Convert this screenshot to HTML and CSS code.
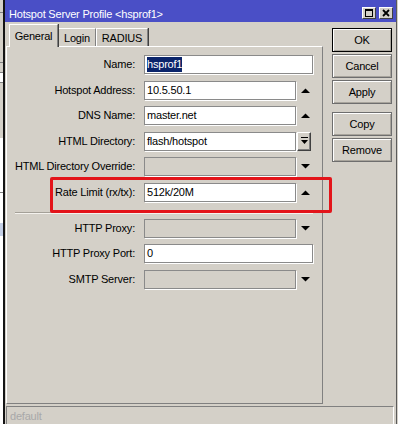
FILE: index.html
```html
<!DOCTYPE html>
<html>
<head>
<meta charset="utf-8">
<link rel="stylesheet" href="styles.css">
</head>
<body>
<div class="screen">
  <div class="behind"></div>
  <div class="window">
    <div class="titlebar">
      <span class="title">Hotspot Server Profile &lt;hsprof1&gt;</span>
      <div class="tbtns">
        <span class="tbtn"><svg width="12" height="10" viewBox="0 0 12 10"><rect x="2.5" y="1.5" width="7" height="7" fill="none" stroke="#000"/><rect x="2" y="1" width="8" height="2" fill="#000"/></svg></span>
        <span class="tbtn"><svg width="12" height="10" viewBox="0 0 12 10"><path d="M3 2 L9 8 M9 2 L3 8" stroke="#000" stroke-width="1.8" fill="none"/></svg></span>
      </div>
    </div>
    <div class="main">
      <div class="tabarea">
        <div class="tabs">
          <div class="tab active t-general">General</div>
          <div class="tab t-login">Login</div>
          <div class="tab t-radius">RADIUS</div>
        </div>
        <div class="panel">
          <div class="form">
            <label>Name:</label>
            <div class="field wide"><span class="sel">hsprof1</span></div>

            <label>Hotspot Address:</label>
            <div class="field">10.5.50.1</div>
            <span class="cell"><svg class="arr" width="9" height="5" viewBox="0 0 9 5"><polygon points="0,5 9,5 4.5,0.5" fill="#000"/></svg></span>

            <label>DNS Name:</label>
            <div class="field">master.net</div>
            <span class="cell"><svg class="arr" width="9" height="5" viewBox="0 0 9 5"><polygon points="0,5 9,5 4.5,0.5" fill="#000"/></svg></span>

            <label>HTML Directory:</label>
            <div class="field">flash/hotspot</div>
            <span class="cell left"><span class="dbtn"><svg width="7" height="8" viewBox="0 0 7 8"><rect x="0" y="0" width="7" height="1" fill="#000"/><polygon points="0,3 7,3 3.5,7" fill="#000"/></svg></span></span>

            <label>HTML Directory Override:</label>
            <div class="field disabled"></div>
            <span class="cell"><svg class="arr" width="9" height="5" viewBox="0 0 9 5"><polygon points="0,0 9,0 4.5,4.5" fill="#000"/></svg></span>

            <label>Rate Limit (rx/tx):</label>
            <div class="field">512k/20M</div>
            <span class="cell"><svg class="arr" width="9" height="5" viewBox="0 0 9 5"><polygon points="0,5 9,5 4.5,0.5" fill="#000"/></svg></span>
          </div>
          <div class="sep"></div>
          <div class="form">
            <label>HTTP Proxy:</label>
            <div class="field disabled"></div>
            <span class="cell"><svg class="arr" width="9" height="5" viewBox="0 0 9 5"><polygon points="0,0 9,0 4.5,4.5" fill="#000"/></svg></span>

            <label>HTTP Proxy Port:</label>
            <div class="field wide">0</div>

            <label>SMTP Server:</label>
            <div class="field disabled"></div>
            <span class="cell"><svg class="arr" width="9" height="5" viewBox="0 0 9 5"><polygon points="0,0 9,0 4.5,4.5" fill="#000"/></svg></span>
          </div>
        </div>
      </div>
      <div class="buttons">
        <div class="btn default">OK</div>
        <div class="btn">Cancel</div>
        <div class="btn">Apply</div>
        <div class="btn gap">Copy</div>
        <div class="btn">Remove</div>
      </div>
    </div>
    <div class="status">default</div>
  </div>
  <div class="redbox"></div>
</div>
</body>
</html>
```
FILE: styles.css
```css
* { box-sizing: border-box; }
html, body { margin: 0; padding: 0; }
body {
  width: 398px;
  height: 424px;
  overflow: hidden;
  background: #d4d0c8;
  font-family: "Liberation Sans", Arial, sans-serif;
  font-size: 11px;
  letter-spacing: -0.2px;
  color: #000;
}
.screen {
  position: relative;
  display: flex;
  height: 424px;
}
.behind {
  width: 3px;
  height: 424px;
  background: linear-gradient(to bottom,
    #d4d0c8 0 12px, #808080 12px 13px,
    #d4d0c8 13px 62px, #808080 62px 63px,
    #d4d0c8 63px 72px, #808080 72px 73px,
    #ffffff 73px 82px, #808080 82px 83px,
    #d4d0c8 83px 138px, #ffffff 138px 192px,
    #808080 192px 193px, #ffffff 193px 223px,
    #c4cfe6 223px 236px, #ffffff 236px 424px);
}
.window {
  width: 394px;
  height: 424px;
  border-left: 2px solid #141414;
  border-right: 1px solid #5a5a5a;
  display: flex;
  flex-direction: column;
  background: #d4d0c8;
}
.titlebar {
  height: 22px;
  flex: none;
  background: #4a4fc6;
  color: #fff;
  display: flex;
  align-items: flex-start;
  justify-content: space-between;
  padding: 0 3px 0 4px;
}
.title {
  padding-top: 8px;
  line-height: 13px;
  font-size: 11px;
  white-space: nowrap;
}
.tbtns {
  display: flex;
  gap: 3px;
  margin-top: 7px;
}
.tbtn {
  width: 14px;
  height: 12px;
  background: #d4d0c8;
  border: 1px solid;
  border-color: #fff #404040 #404040 #fff;
  display: flex;
  align-items: center;
  justify-content: center;
}
.main {
  display: flex;
  height: 382px;
  flex: none;
}
.tabarea {
  margin-left: 1px;
  width: 317px;
  display: flex;
  flex-direction: column;
}
.tabs {
  height: 24px;
  display: flex;
  align-items: flex-end;
  padding-left: 3px;
}
.tab {
  height: 18px;
  border-top: 1px solid #fff;
  border-left: 1px solid #fff;
  border-right: 1px solid #808080;
  box-shadow: 1px 0 0 #404040;
  display: flex;
  align-items: center;
  justify-content: center;
  white-space: nowrap;
  background: #d4d0c8;
}
.tab.active {
  position: relative;
  z-index: 1;
  height: 23px;
  margin-bottom: -1px;
  padding-bottom: 1px;
}
.t-general { width: 49px; }
.t-login { width: 38px; }
.t-radius { width: 52px; background: #cdc9c1; }
.panel {
  height: 358px;
  border: 1px solid;
  border-color: #fff #808080 #808080 #fff;
  padding-top: 8px;
}
.form {
  display: grid;
  grid-template-columns: 137px 152px 17px;
  grid-auto-rows: 19px;
  row-gap: 6.5px;
}
.form label {
  text-align: right;
  padding-right: 9px;
  line-height: 19px;
  white-space: nowrap;
}
.field {
  height: 19px;
  border: 1px solid #8a8a8a;
  box-shadow: 1px 1px 0 #fff;
  background: #fff;
  line-height: 17px;
  padding-left: 2px;
  white-space: nowrap;
  overflow: hidden;
}
.field.wide { grid-column: span 2; }
.field.disabled { background: #d4d0c8; }
.sel {
  display: inline-block;
  background: #0a246a;
  color: #fff;
  line-height: 15px;
  vertical-align: top;
  margin-top: 1px;
}
.cell {
  display: flex;
  align-items: center;
  justify-content: center;
  padding-left: 1px;
}
.cell.left { justify-content: flex-start; }
.dbtn {
  width: 14px;
  height: 19px;
  border: 1px solid;
  border-color: #fff #404040 #404040 #fff;
  box-shadow: inset -1px -1px 0 #808080;
  display: flex;
  align-items: center;
  justify-content: center;
  padding-bottom: 1px;
}
.sep {
  margin: 10px 0 5px 8px;
  width: 298px;
  height: 2px;
  border-top: 1px solid #a4a098;
  border-bottom: 1px solid #f4f2ee;
}
.buttons {
  margin-left: 9px;
  width: 60px;
  padding-top: 6px;
  display: flex;
  flex-direction: column;
  gap: 2px;
}
.btn {
  height: 24px;
  border: 1px solid #6e6e6e;
  box-shadow: inset 1px 1px 0 #fff, inset -1px -1px 0 #a8a49c;
  display: flex;
  align-items: center;
  justify-content: center;
  font-size: 11px;
}
.btn.default { border-color: #000; }
.btn.gap { margin-top: 6px; }
.status {
  margin-top: 2px;
  margin-left: 1px;
  width: 388px;
  flex: 1;
  border-top: 1px solid #808080;
  border-left: 1px solid #808080;
  border-right: 1px solid #fff;
  color: #a8a8a8;
  padding: 2px 0 0 3px;
  line-height: 14px;
}
.redbox {
  position: absolute;
  left: 50px;
  top: 177px;
  width: 282px;
  height: 36px;
  border: 3px solid #e3141a;
  border-radius: 2px;
  pointer-events: none;
}
```
